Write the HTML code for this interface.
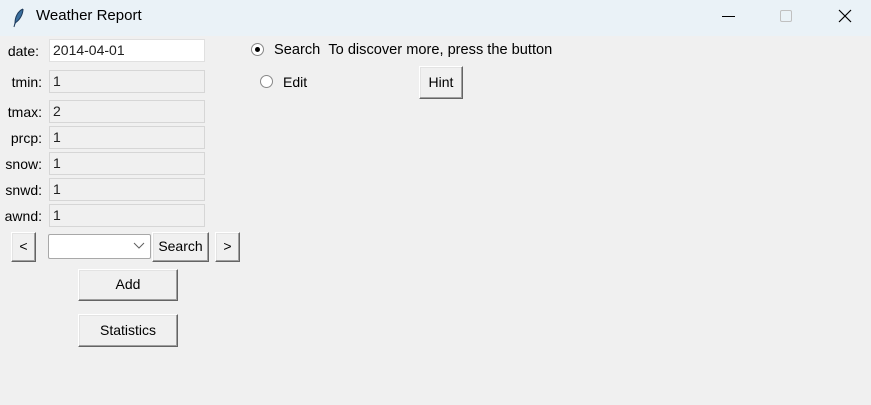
<!DOCTYPE html>
<html><head><meta charset="utf-8"><style>
*{box-sizing:border-box;margin:0;padding:0}
body{width:871px;height:405px;background:#f0f0f0;font-family:"Liberation Sans",sans-serif;font-size:14px;color:#000;position:relative;overflow:hidden}
.tb{position:absolute;left:0;top:0;width:871px;height:36px;background:#eaf2f7}
.a{position:absolute}
.lbl{position:absolute;text-align:right;width:42px;left:0;line-height:22px}
.en{position:absolute;left:49px;width:156px;height:23px;border:1px solid #d6d6d6;background:#f0f0f0;padding-left:3px;line-height:21px;color:#202020}
.btn{position:absolute;background:#f0f0f0;border:1px solid;border-color:#fff #646464 #646464 #fff;box-shadow:inset -1px -1px 0 #a0a0a0,inset 1px 1px 0 #e3e3e3;text-align:center;font-size:14px}
</style></head><body>
<div class="tb"></div>
<svg class="a" style="left:13px;top:8px" width="12" height="20" viewBox="0 0 12 20"><path d="M10 1 C5 3 2 9 2 15 L1 19 M2 15 C7 12 10 6 10 1" fill="#3a6f9e" stroke="#1e3a5a" stroke-width="1"/></svg>
<div class="a" style="left:36px;top:7px;font-size:15px">Weather Report</div>
<div class="a" style="left:722px;top:16px;width:13px;height:1px;background:#000"></div>
<div class="a" style="left:780px;top:10px;width:12px;height:12px;border:1px solid #c0c0c0;border-radius:2px"></div>
<svg class="a" style="left:838px;top:9px" width="14" height="14"><path d="M1 1L13 13M13 1L1 13" stroke="#000" stroke-width="1.2"/></svg>

<div class="lbl" style="top:40px;left:-3px">date:</div>
<div class="en" style="top:39px;background:#fff;border-color:#e0e0e0">2014-04-01</div>
<div class="lbl" style="top:71px">tmin:</div><div class="en" style="top:70px">1</div>
<div class="lbl" style="top:101px">tmax:</div><div class="en" style="top:100px">2</div>
<div class="lbl" style="top:127px">prcp:</div><div class="en" style="top:126px">1</div>
<div class="lbl" style="top:153px">snow:</div><div class="en" style="top:152px">1</div>
<div class="lbl" style="top:179px">snwd:</div><div class="en" style="top:178px">1</div>
<div class="lbl" style="top:205px">awnd:</div><div class="en" style="top:204px">1</div>

<div class="btn" style="left:11px;top:232px;width:25px;height:30px;line-height:27px">&lt;</div>
<div class="a" style="left:48px;top:234px;width:103px;height:25px;background:#fff;border:1px solid #a8a8a8;border-radius:2px"></div>
<svg class="a" style="left:133px;top:242px" width="12" height="8"><path d="M1 1L6 6L11 1" stroke="#606060" fill="none"/></svg>
<div class="btn" style="left:152px;top:232px;width:57px;height:30px;line-height:27px">Search</div>
<div class="btn" style="left:215px;top:232px;width:25px;height:30px;line-height:27px">&gt;</div>
<div class="btn" style="left:78px;top:269px;width:100px;height:32px;line-height:29px">Add</div>
<div class="btn" style="left:78px;top:314px;width:100px;height:33px;line-height:30px">Statistics</div>

<div class="a" style="left:251px;top:43px;width:13px;height:13px;border-radius:50%;background:#fff;border:1px solid #888"></div>
<div class="a" style="left:255px;top:47px;width:5px;height:5px;border-radius:50%;background:#000"></div>
<div class="a" style="left:274px;top:42px;font-size:14.6px">Search&nbsp;&nbsp;To discover more, press the button</div>
<div class="a" style="left:260px;top:75px;width:13px;height:13px;border-radius:50%;background:#fff;border:1px solid #888"></div>
<div class="a" style="left:283px;top:74px">Edit</div>
<div class="btn" style="left:419px;top:66px;width:44px;height:33px;line-height:30px">Hint</div>
</body></html>
